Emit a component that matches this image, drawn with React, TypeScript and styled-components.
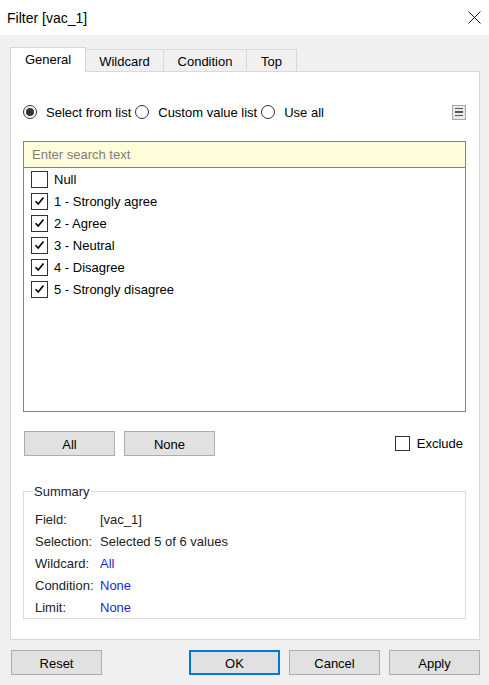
import React from "react";
import styled, { createGlobalStyle } from "styled-components";

const Global = createGlobalStyle`
  html, body { margin: 0; padding: 0; background: #f0f0f0; }
  body { font-family: "Liberation Sans", Arial, sans-serif; font-size: 13px; color: #000; }
  * { box-sizing: border-box; }
`;

const Window = styled.div`
  width: 489px;
  height: 685px;
  background: #f0f0f0;
  display: flex;
  flex-direction: column;
`;

const TitleBar = styled.div`
  height: 35px;
  background: #fff;
  display: flex;
  align-items: center;
  justify-content: space-between;
  padding: 0 8px 0 7px;
`;

const Title = styled.div`
  font-size: 14px;
  color: #000;
`;

const CloseBtn = styled.div`
  width: 14px;
  height: 14px;
  display: flex;
  align-items: center;
  justify-content: center;
`;

const Body = styled.div`
  padding: 13px 9px 0 10px;
  display: flex;
  flex-direction: column;
`;

const TabStrip = styled.div`
  display: flex;
  align-items: flex-end;
  height: 24px;
  position: relative;
  z-index: 1;
  margin-bottom: -1px;
`;

const Tab = styled.div<{ $active?: boolean; $w: number }>`
  width: ${(p) => p.$w}px;
  height: ${(p) => (p.$active ? 25 : 23)}px;
  background: ${(p) => (p.$active ? "#fff" : "#f0f0f0")};
  border: 1px solid #d9d9d9;
  border-bottom: ${(p) => (p.$active ? "1px solid #fff" : "1px solid #d9d9d9")};
  margin-left: ${(p) => (p.$active ? 0 : -1)}px;
  display: flex;
  align-items: center;
  justify-content: center;
  padding-top: ${(p) => (p.$active ? 0 : 1)}px;
  font-size: 13px;
`;

const Panel = styled.div`
  height: 569px;
  background: #fff;
  border: 1px solid #d9d9d9;
  padding: 0 13px 0 12px;
  display: flex;
  flex-direction: column;
`;

const RadioRow = styled.div`
  margin-top: 32px;
  height: 16px;
  display: flex;
  align-items: center;
`;

const RadioItem = styled.label`
  display: flex;
  align-items: center;
  margin-right: 4px;
`;

const RadioCircle = styled.span<{ $on?: boolean }>`
  width: 14px;
  height: 14px;
  border-radius: 50%;
  border: 1px solid #333;
  background: #fff;
  display: flex;
  align-items: center;
  justify-content: center;
  margin-right: 9px;
  &::after {
    content: "";
    width: 8px;
    height: 8px;
    border-radius: 50%;
    background: ${(p) => (p.$on ? "#333" : "transparent")};
  }
`;

const MenuIcon = styled.div`
  margin-left: auto;
  width: 14px;
  height: 15px;
  border: 1px solid #a5a5a5;
  background: #e8eaee;
  display: flex;
  flex-direction: column;
  align-items: center;
  justify-content: center;
  gap: 2px;
  & > span {
    width: 8px;
    height: 1.5px;
    background: #555;
  }
`;

const ListBox = styled.div`
  margin-top: 21px;
  height: 271px;
  border: 1px solid #828282;
  display: flex;
  flex-direction: column;
`;

const Search = styled.div`
  height: 26px;
  background: #fffcd9;
  border-bottom: 1px solid #828282;
  color: #7d7d7d;
  display: flex;
  align-items: center;
  padding-left: 8px;
`;

const Items = styled.div`
  display: flex;
  flex-direction: column;
`;

const Item = styled.div`
  height: 22px;
  display: flex;
  align-items: center;
  padding-left: 7px;
`;

const Check = styled.span<{ $size?: number; $gap?: number }>`
  width: ${(p) => p.$size ?? 17}px;
  height: ${(p) => p.$size ?? 17}px;
  border: 1px solid #333;
  background: #fff;
  display: inline-flex;
  align-items: center;
  justify-content: center;
  margin-right: ${(p) => p.$gap ?? 6}px;
`;

const ButtonsRow = styled.div`
  margin-top: 19px;
  display: flex;
  align-items: center;
  padding-left: 1px;
`;

const Btn = styled.button<{ $primary?: boolean; $w?: number }>`
  width: ${(p) => p.$w ?? 91}px;
  height: 25px;
  background: #e1e1e1;
  border: ${(p) => (p.$primary ? "2px solid #0078d7" : "1px solid #adadad")};
  font-family: "Liberation Sans", Arial, sans-serif;
  font-size: 13px;
  color: #000;
  padding: 1px 0 0 0;
  margin-right: 9px;
  display: flex;
  align-items: center;
  justify-content: center;
`;

const ExcludeLabel = styled.label`
  margin-left: auto;
  display: flex;
  align-items: center;
  margin-right: 3px;
`;

const Summary = styled.fieldset`
  margin: 28px 0 0 0;
  height: 135px;
  border: 1px solid #dcdcdc;
  padding: 9px 11px 0 11px;
  min-width: 0;
`;

const Legend = styled.legend`
  padding: 0 1px;
  margin-left: -2px;
  color: #222;
`;

const SummaryRow = styled.div`
  height: 22px;
  display: flex;
  align-items: center;
`;

const Key = styled.span`
  width: 65px;
  color: #222;
`;

const Val = styled.span<{ $link?: boolean }>`
  color: ${(p) => (p.$link ? "#1f1fcf" : "#222")};
`;

const Footer = styled.div`
  margin-top: 10px;
  padding: 0 0 0 1px;
  display: flex;
  align-items: center;
`;

const FooterRight = styled.div`
  margin-left: auto;
  display: flex;
  gap: 9px;
  & > button { margin-right: 0; }
`;

const CheckMark = () => (
  <svg width="11" height="10" viewBox="0 0 11 10">
    <path d="M1.5 5.2 L4.2 8 L9.5 1.5" fill="none" stroke="#000" strokeWidth="1.6" />
  </svg>
);

const items: { label: string; checked: boolean }[] = [
  { label: "Null", checked: false },
  { label: "1 - Strongly agree", checked: true },
  { label: "2 - Agree", checked: true },
  { label: "3 - Neutral", checked: true },
  { label: "4 - Disagree", checked: true },
  { label: "5 - Strongly disagree", checked: true },
];

const summary: { k: string; v: string; link?: boolean }[] = [
  { k: "Field:", v: "[vac_1]" },
  { k: "Selection:", v: "Selected 5 of 6 values" },
  { k: "Wildcard:", v: "All", link: true },
  { k: "Condition:", v: "None", link: true },
  { k: "Limit:", v: "None", link: true },
];

export default function App() {
  return (
    <Window>
      <Global />
      <TitleBar>
        <Title>Filter [vac_1]</Title>
        <CloseBtn>
          <svg width="13" height="13" viewBox="0 0 13 13">
            <path d="M0.5 0.5 L12.5 12.5 M12.5 0.5 L0.5 12.5" stroke="#111" strokeWidth="1" />
          </svg>
        </CloseBtn>
      </TitleBar>
      <Body>
        <TabStrip>
          <Tab $active $w={76}>General</Tab>
          <Tab $w={79}>Wildcard</Tab>
          <Tab $w={84}>Condition</Tab>
          <Tab $w={51}>Top</Tab>
        </TabStrip>
        <Panel>
          <RadioRow>
            <RadioItem>
              <RadioCircle $on />
              Select from list
            </RadioItem>
            <RadioItem>
              <RadioCircle />
              Custom value list
            </RadioItem>
            <RadioItem>
              <RadioCircle />
              Use all
            </RadioItem>
            <MenuIcon>
              <span />
              <span />
              <span />
            </MenuIcon>
          </RadioRow>
          <ListBox>
            <Search>Enter search text</Search>
            <Items>
              {items.map((it) => (
                <Item key={it.label}>
                  <Check>{it.checked && <CheckMark />}</Check>
                  {it.label}
                </Item>
              ))}
            </Items>
          </ListBox>
          <ButtonsRow>
            <Btn>All</Btn>
            <Btn>None</Btn>
            <ExcludeLabel>
              <Check $size={15} $gap={7} />
              Exclude
            </ExcludeLabel>
          </ButtonsRow>
          <Summary>
            <Legend>Summary</Legend>
            {summary.map((r) => (
              <SummaryRow key={r.k}>
                <Key>{r.k}</Key>
                <Val $link={r.link}>{r.v}</Val>
              </SummaryRow>
            ))}
          </Summary>
        </Panel>
        <Footer>
          <Btn>Reset</Btn>
          <FooterRight>
            <Btn $primary>OK</Btn>
            <Btn>Cancel</Btn>
            <Btn>Apply</Btn>
          </FooterRight>
        </Footer>
      </Body>
    </Window>
  );
}
